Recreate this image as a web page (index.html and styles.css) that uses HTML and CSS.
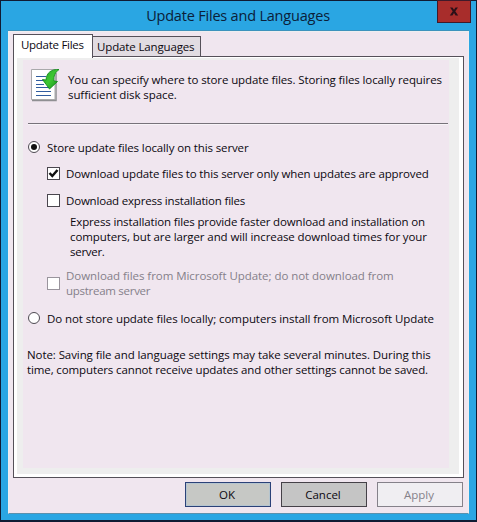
FILE: index.html
```html
<!DOCTYPE html>
<html lang="en">
<head>
<meta charset="utf-8">
<title>Update Files and Languages</title>
<link rel="stylesheet" href="styles.css">
</head>
<body>
<main class="window">
  <header class="titlebar">
    <h1 class="title">Update Files and Languages</h1>
    <button class="close" aria-label="Close"><svg width="10" height="9" viewBox="0 0 10 9"><path d="M1 .5h2.5L5 2.7 6.500.5H9L6.300 4.300 9.200 8.500H6.600L5 6 3.400 8.500H.8L3.700 4.300Z" fill="#2a1018"/></svg></button>
  </header>
  <section class="client">
    <nav class="tabs">
      <div class="tab active"><span class="t-tab1">Update Files</span></div>
      <div class="tab"><span class="t-tab2">Update Languages</span></div>
    </nav>
    <div class="panel">
      <div class="page">
        <div class="intro">
          <svg class="doc" width="30" height="34" viewBox="0 0 30 34">
            <defs><linearGradient id="arrow" x1="0" y1="0" x2="1" y2="1"><stop offset="0" stop-color="#23a52a"/><stop offset=".5" stop-color="#3fc832"/><stop offset="1" stop-color="#108c18"/></linearGradient></defs>
            <path d="M2 32.500H26V5" fill="none" stroke="#8f8f92" stroke-width="1.500"/>
            <path d="M1.500 1.500H25V31.500H1.500Z" fill="#fff" stroke="#a9a9ab"/>
            <path d="M6 8.500H16M6 12.500H14M6 16.500H14M6 19.500H21M6 23.500H21M6 27.500H21" stroke="#315c9f" stroke-width="1.200"/>
            <path d="M29 1.500C21.500 1 16.500 4.500 16 12L12.500 11.500 19.500 21 27.500 13.500 24 13C23.300 8 25 4.500 29 1.500Z" fill="url(#arrow)" stroke="#138a1b" stroke-width=".9"/>
          </svg>
          <p><span class="t-in1">You can specify where to store update files. Storing files locally requires</span><span class="t-in2">sufficient disk space.</span></p>
        </div>
        <div class="rule"></div>
        <div class="option radio-row first"><i class="radio on"></i><p><span class="t-r1">Store update files locally on this server</span></p></div>
        <div class="option check-row c1"><i class="box"><svg width="11" height="11" viewBox="0 0 11 11"><path d="M1.500 5 4.300 8 9.500 2" fill="none" stroke="#111" stroke-width="2.500"/></svg></i><p><span class="t-c1">Download update files to this server only when updates are approved</span></p></div>
        <div class="option check-row c2"><i class="box"></i><p><span class="t-c2">Download express installation files</span></p></div>
        <p class="detail"><span class="t-d1">Express installation files provide faster download and installation on</span><span class="t-d2">computers, but are larger and will increase download times for your</span><span class="t-d3">server.</span></p>
        <div class="option check-row c3 disabled"><i class="box"></i><p><span class="t-m1">Download files from Microsoft Update; do not download from</span><span class="t-m2">upstream server</span></p></div>
        <div class="option radio-row second"><i class="radio"></i><p><span class="t-r2">Do not store update files locally; computers install from Microsoft Update</span></p></div>
        <p class="note"><span class="t-n1">Note: Saving file and language settings may take several minutes. During this</span><span class="t-n2">time, computers cannot receive updates and other settings cannot be saved.</span></p>
      </div>
    </div>
    <footer class="actions">
      <button class="btn default">OK</button>
      <button class="btn">Cancel</button>
      <button class="btn off">Apply</button>
    </footer>
  </section>
</main>
</body>
</html>
```
FILE: styles.css
```css
* { box-sizing: border-box; }
body { margin: 0; font: 11.5px/15px "Open Sans", "Noto Sans", sans-serif; color: #0c0810; }
p, h1 { margin: 0; }
p span { display: block; width: max-content; white-space: nowrap; }
button { font: inherit; color: inherit; padding: 0; }
.window { width: 477px; height: 522px; background: #2aa6e3; border: 1px solid #101b33; border-bottom-width: 2px; padding: 0 7px 6px; display: flex; flex-direction: column; }
.titlebar { height: 30px; flex: none; display: grid; grid-template-columns: 1fr; position: relative; border-bottom: 1px solid #3c93bd; }
.title { font-size: 14.5px; letter-spacing: -.2px; font-weight: 400; line-height: 20px; text-align: center; padding: 5px 1px 0 0; color: #0b2039; white-space: nowrap; }
.close { position: absolute; right: -2px; top: -1px; width: 34px; height: 23px; background: #a82d2b; border: 1px solid #401a2a; display: flex; align-items: center; justify-content: center; }
.client { flex: 1; background: #f0e6ef; border: 1px solid #eeeef0; border-bottom: 1px solid #5a91ae; padding: 2px 4px 0; display: flex; flex-direction: column; }
.tabs { display: flex; align-items: flex-end; height: 22px; flex: none; white-space: nowrap; }
.tab { height: 20px; width: 108px; border: 1px solid #555059; border-left: 0; border-bottom: 0; background: #e1dce2; padding: 2px 0 0 4px; }
.tab.active { width: 80px; height: 24px; margin-bottom: -2px; background: #fff; border-left: 1px solid #555059; padding: 2px 0 0 7px; z-index: 1; }
.panel { height: 422px; flex: none; border: 1px solid #555059; background: #fff; padding: 1px 4px 3px 3px; display: flex; width: 451px; }
.page { flex: 1; min-width: 0; border: solid #eee; border-width: 2px 10px 6px 6px; background: #f0e6ef; padding: 8px 0 0 4px; }
.intro { display: flex; padding-left: 3px; height: 55px; }
.intro p { padding: 4px 0 0 8px; }
.doc { flex: none; }
.rule { height: 2px; border-top: 1px solid #77727a; border-bottom: 1px solid #f8f4f8; width: 420px; margin-left: 1px; }
.option { display: flex; }
.option p { white-space: nowrap; }
.radio { width: 12px; height: 12px; border: 1.500px solid #4e4a52; border-radius: 50%; background: #fff; margin: 1px 7px 0 1px; display: flex; align-items: center; justify-content: center; }
.radio.on::after { content: ""; width: 6px; height: 6px; border-radius: 50%; background: #111; }
.box { width: 13px; height: 13px; border: 1px solid #4a464e; background: #fff; margin: 1px 6px 0 20px; flex: none; display: flex; }
.first { margin-top: 15px; }
.c1 { margin-top: 11px; }
.c2 { margin-top: 12px; }
.detail { margin: 6px 0 0 43px; }
.c3 { margin-top: 9px; }
.disabled { color: #85808a; }
.disabled .box { border-color: #99949c; margin-top: 9px; }
.second { margin-top: 13px; }
.note { margin-top: 21px; }
.actions { display: flex; gap: 10px; justify-content: flex-end; padding: 4px 1px 0 0; }
.btn { width: 86px; height: 25px; border: 1px solid #454148; background: #c5c5c5; text-align: center; padding-right: 2px; }
.btn.default { border-color: #2b4178; background: #c6c8c5; box-shadow: inset 0 0 0 1px #b5c5cf; }
.btn.off { color: #85818a; background: #f0eef2; border-color: #85818a; }

/* tracking per line */
.t-tab1, .t-d3, .t-m2 { letter-spacing: -.28px; }
.t-tab2, .t-d1 { letter-spacing: -.14px; }
.t-in1 { letter-spacing: -.11px; }
.t-in2, .t-r2 { letter-spacing: -.08px; }
.t-r1, .t-n2 { letter-spacing: -.12px; }
.t-c1 { letter-spacing: -.15px; }
.t-c2 { letter-spacing: -.19px; }
.t-d2 { letter-spacing: -.1px; }
.t-m1 { letter-spacing: -.05px; }
.t-n1 { letter-spacing: -.085px; }
```
